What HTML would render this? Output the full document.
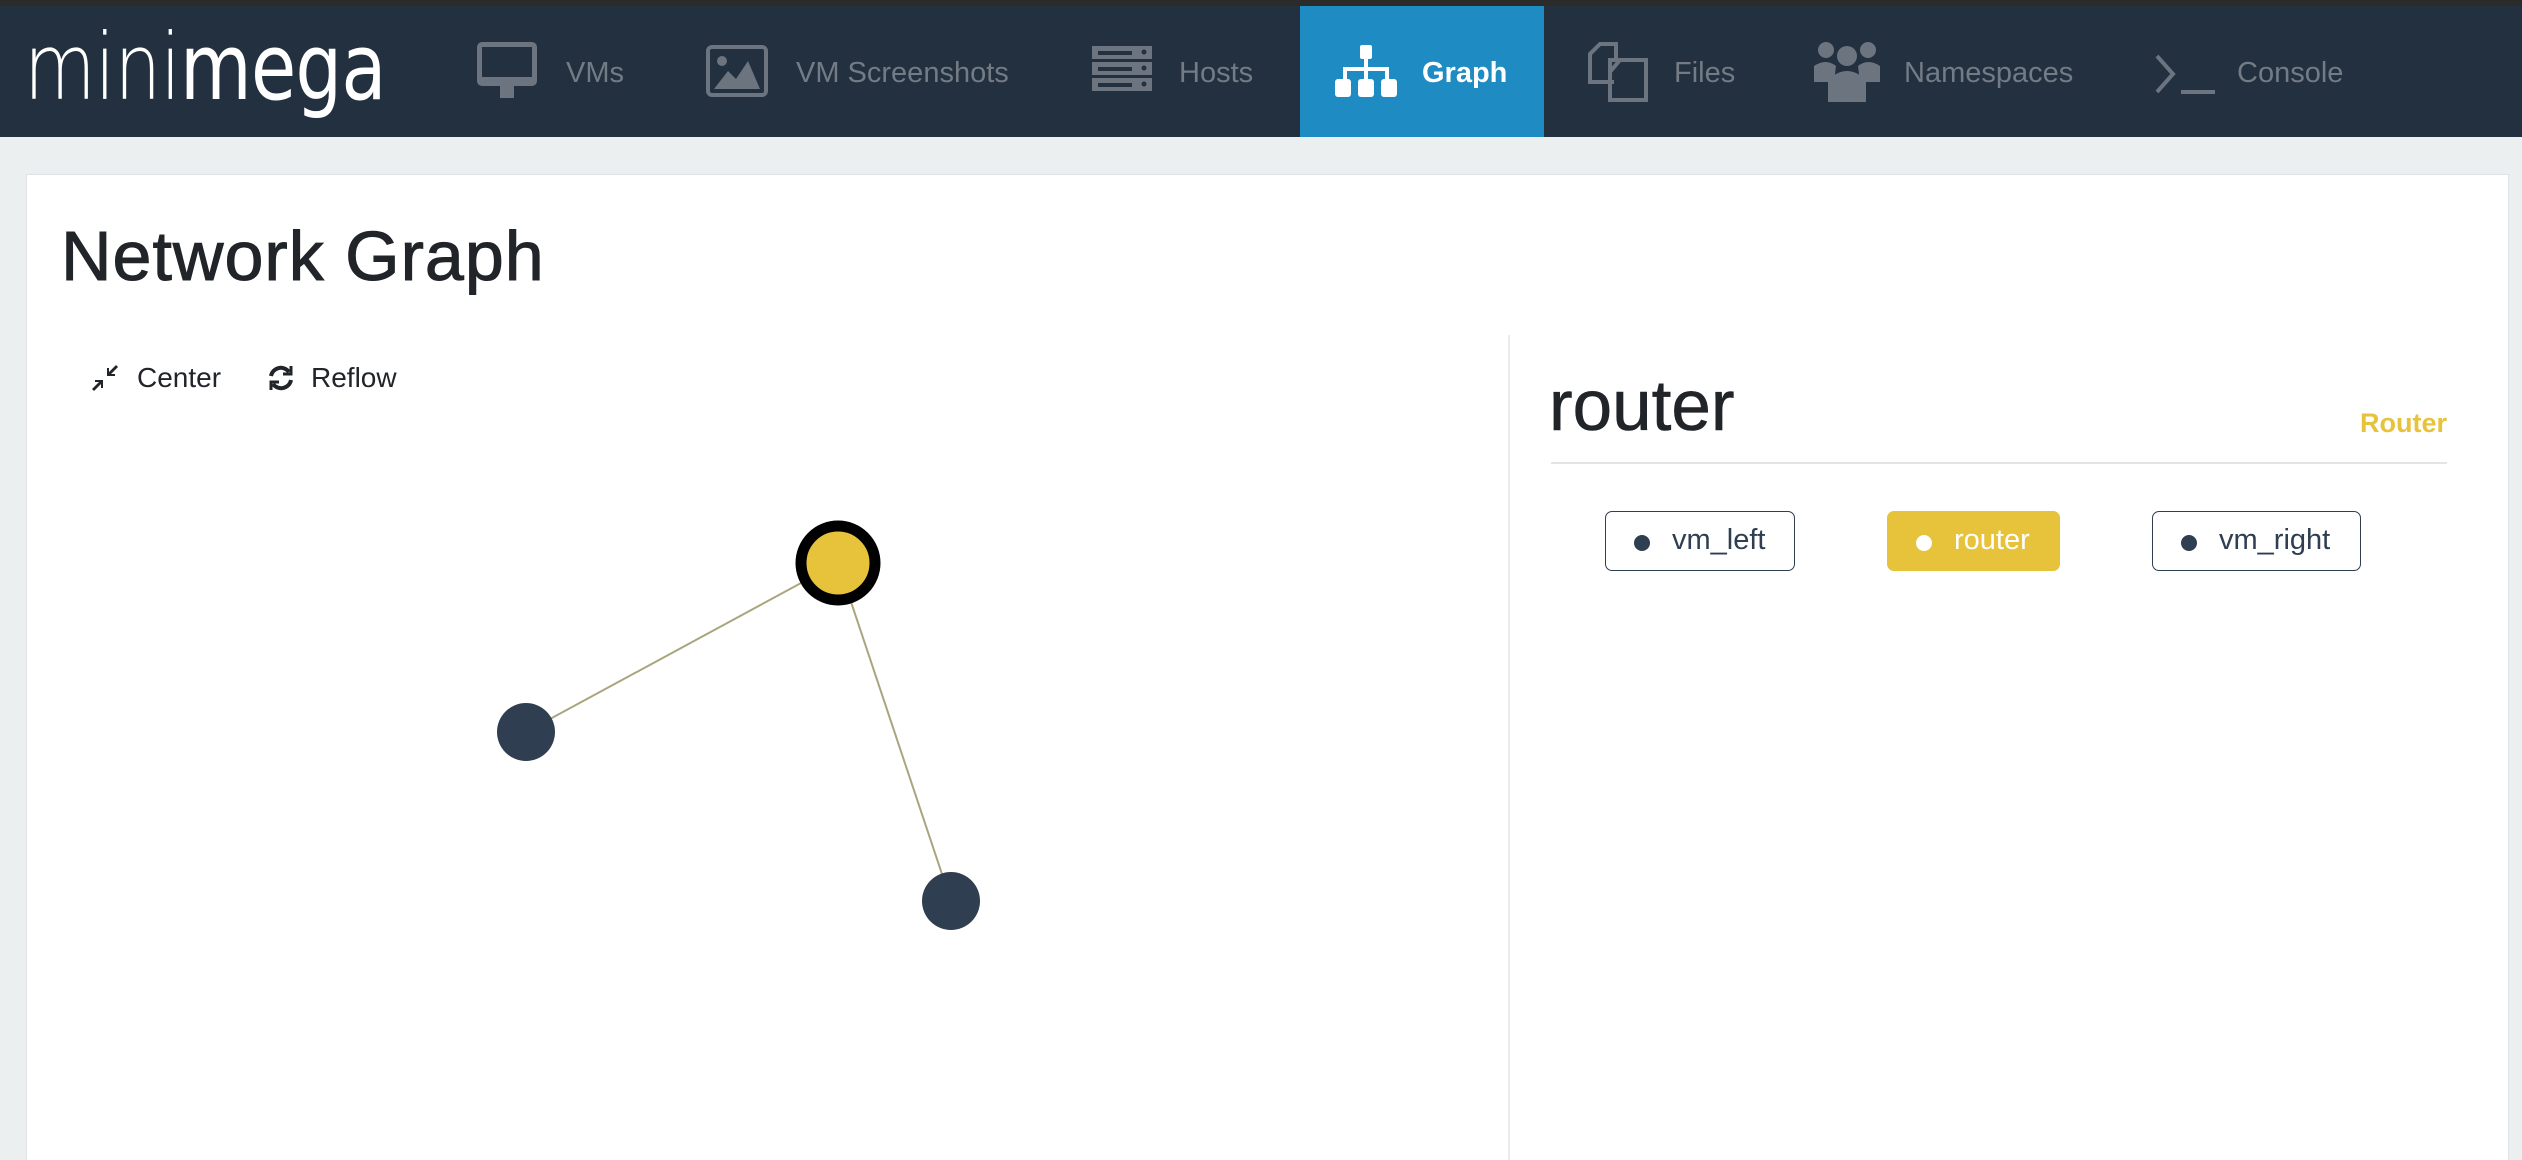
<!DOCTYPE html>
<html style="height:1160px;overflow:hidden"><head><meta charset="utf-8"><style>
*{margin:0;padding:0;box-sizing:border-box}
body{width:2522px;height:1160px;overflow:hidden;background:#ebeff0;font-family:"Liberation Sans",sans-serif;position:relative}
.top{position:absolute;left:0;top:0;width:2522px;height:6px;background:#2b2b2b}
.nav{position:absolute;left:0;top:6px;width:2522px;height:131px;background:#22303f}
.act{position:absolute;left:1300px;top:6px;width:244px;height:131px;background:#1e8bc3}
.t{position:absolute;top:57px;font-size:29px;color:#737b85}
.ic{position:absolute}
.logo{position:absolute;left:24px;top:14px;font-size:92px;color:#fff;font-weight:100;letter-spacing:-1px;font-family:"DejaVu Sans","Liberation Sans",sans-serif;transform:scaleX(0.8);transform-origin:left}
.card{position:absolute;left:26px;top:174px;width:2483px;height:986px;background:#fff;border:1px solid #dee2e6;border-bottom:none}
h1{position:absolute;left:61px;top:216px;font-size:70px;font-weight:normal;color:#212529;letter-spacing:1px;-webkit-text-stroke:1px #212529}
.tool{position:absolute;top:362px;font-size:28px;color:#212529}
.div{position:absolute;left:1508px;top:335px;width:2px;height:825px;background:#e9ecef}
.rt{position:absolute;left:1549px;top:366px;font-size:71px;color:#212529;-webkit-text-stroke:0.6px #212529}
.rl{position:absolute;right:75px;top:408px;font-size:27px;font-weight:bold;color:#e7c23b}
.hr{position:absolute;left:1551px;top:462px;width:896px;height:2px;background:#e2e5e8}
.b{position:absolute;top:511px;height:60px;border:1.5px solid #2f3e50;border-radius:7px;font-size:29px;color:#2f3e50;line-height:57px;padding-left:66px}
.b i{position:absolute;left:28px;top:23px;width:16px;height:16px;border-radius:50%;background:#2f3e50}
</style></head><body>
<div class="top"></div><div class="nav"></div><div class="act"></div>
<div class="logo">mini<span style="font-weight:normal">mega</span></div>
<svg class="ic" style="left:476px;top:42px" width="62" height="56" viewBox="0 0 62 56"><rect x="1" y="0" width="60" height="44" rx="5" fill="#6c7480"/><rect x="6" y="5" width="50" height="30" fill="#22303f"/><rect x="24" y="44" width="14" height="12" fill="#6c7480"/></svg>
<div class="t" style="left:566px">VMs</div>
<svg class="ic" style="left:706px;top:45px" width="62" height="52" viewBox="0 0 62 52"><rect x="2" y="2" width="58" height="48" rx="4" fill="none" stroke="#6c7480" stroke-width="4"/><circle cx="16" cy="16" r="5" fill="#6c7480"/><path d="M8 44 L22 26 L30 34 L42 16 L54 44Z" fill="#6c7480"/></svg>
<div class="t" style="left:796px">VM Screenshots</div>
<svg class="ic" style="left:1092px;top:46px" width="60" height="46" viewBox="0 0 60 46"><g fill="#6c7480"><rect y="0" width="60" height="13"/><rect y="16" width="60" height="13"/><rect y="32" width="60" height="13"/></g><g fill="#22303f"><rect x="6" y="5" width="34" height="4"/><rect x="6" y="21" width="34" height="4"/><rect x="6" y="37" width="34" height="4"/><circle cx="52" cy="6" r="2.5"/><circle cx="52" cy="22" r="2.5"/><circle cx="52" cy="38" r="2.5"/></g></svg>
<div class="t" style="left:1179px">Hosts</div>
<svg class="ic" style="left:1335px;top:45px" width="62" height="52" viewBox="0 0 62 52" fill="#fff"><rect x="25" y="0" width="12" height="14" rx="2"/><rect x="29" y="14" width="4" height="10"/><rect x="8" y="22" width="46" height="4"/><rect x="8" y="22" width="4" height="12"/><rect x="29" y="22" width="4" height="12"/><rect x="50" y="22" width="4" height="12"/><rect x="0" y="34" width="16" height="18" rx="3"/><rect x="23" y="34" width="16" height="18" rx="3"/><rect x="46" y="34" width="16" height="18" rx="3"/></svg>
<div class="t" style="left:1422px;color:#fff;font-weight:bold">Graph</div>
<svg class="ic" style="left:1588px;top:42px" width="60" height="60" viewBox="0 0 60 60" fill="none" stroke="#6c7480" stroke-width="4"><path d="M26 40 H2 V12 L12 2 H28 V16"/><path d="M22 18 H58 V58 H22 Z M22 30 L32 18"/></svg>
<div class="t" style="left:1674px">Files</div>
<svg class="ic" style="left:1814px;top:40px" width="66" height="62" viewBox="0 0 66 62" fill="#6c7480"><circle cx="12" cy="10" r="8"/><circle cx="54" cy="10" r="8"/><circle cx="33" cy="16" r="10"/><path d="M0 26 Q12 18 22 26 L20 42 H0Z"/><path d="M66 26 Q54 18 44 26 L46 42 H66Z"/><path d="M14 62 V40 Q33 22 52 40 V62Z"/></svg>
<div class="t" style="left:1904px">Namespaces</div>
<svg class="ic" style="left:2155px;top:54px" width="62" height="40" viewBox="0 0 62 40" fill="none" stroke="#6c7480" stroke-width="4"><path d="M2 2 L18 20 L2 38"/><path d="M26 38 H60"/></svg>
<div class="t" style="left:2237px">Console</div>
<div class="card"></div>
<h1>Network Graph</h1>
<svg class="ic" style="left:92px;top:365px" width="26" height="26" viewBox="0 0 26 26" fill="#212529"><path d="M26 2 L24 0 L17 7 V3 H15 V11 H23 V9 H19Z M0 24 L2 26 L9 19 V23 H11 V15 H3 V17 H7Z"/></svg>
<div class="tool" style="left:137px">Center</div>
<svg class="ic" style="left:267px;top:364px" width="28" height="28" viewBox="0 0 28 28" fill="none" stroke="#212529" stroke-width="4"><path d="M4 12 A10 10 0 0 1 22 8"/><path d="M24 16 A10 10 0 0 1 6 20"/><path d="M24 2 V10 H16 M4 26 V18 H12" stroke-width="3"/></svg>
<div class="tool" style="left:311px">Reflow</div>
<svg class="ic" style="left:0;top:0" width="1500" height="1160"><g stroke="#a9a57f" stroke-width="2"><line x1="838" y1="563" x2="526" y2="732"/><line x1="838" y1="563" x2="951" y2="901"/></g><circle cx="526" cy="732" r="29" fill="#2f3e50"/><circle cx="951" cy="901" r="29" fill="#2f3e50"/><circle cx="838" cy="563" r="37" fill="#e7c23b" stroke="#000" stroke-width="11"/></svg>
<div class="div"></div>
<div class="rt">router</div>
<div class="rl">Router</div>
<div class="hr"></div>
<div class="b" style="left:1605px;width:190px"><i></i>vm_left</div>
<div class="b" style="left:1887px;width:173px;background:#e7c23b;border-color:#e7c23b;color:#fff"><i style="background:#fff"></i>router</div>
<div class="b" style="left:2152px;width:209px"><i></i>vm_right</div>
</body></html>
